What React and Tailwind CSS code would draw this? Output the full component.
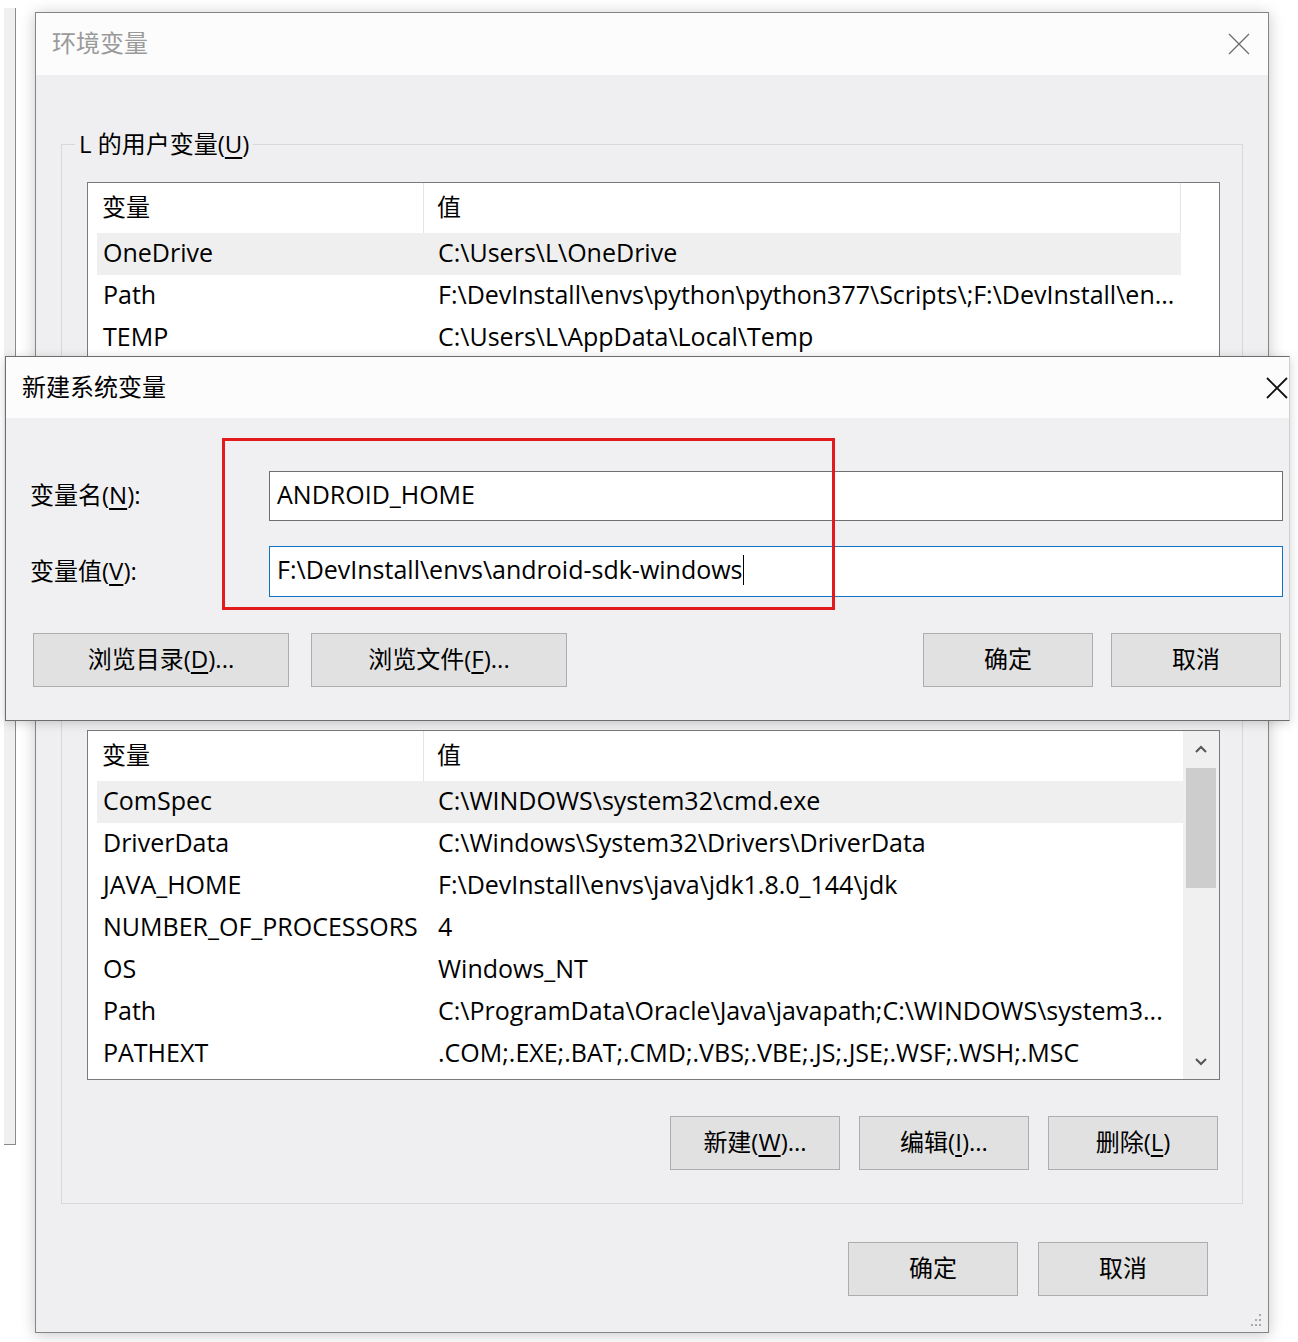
import React from "react";

const userVars = [
  ["OneDrive", "C:\\Users\\L\\OneDrive"],
  ["Path", "F:\\DevInstall\\envs\\python\\python377\\Scripts\\;F:\\DevInstall\\en..."],
  ["TEMP", "C:\\Users\\L\\AppData\\Local\\Temp"],
];

const systemVars = [
  ["ComSpec", "C:\\WINDOWS\\system32\\cmd.exe"],
  ["DriverData", "C:\\Windows\\System32\\Drivers\\DriverData"],
  ["JAVA_HOME", "F:\\DevInstall\\envs\\java\\jdk1.8.0_144\\jdk"],
  ["NUMBER_OF_PROCESSORS", "4"],
  ["OS", "Windows_NT"],
  ["Path", "C:\\ProgramData\\Oracle\\Java\\javapath;C:\\WINDOWS\\system3..."],
  ["PATHEXT", ".COM;.EXE;.BAT;.CMD;.VBS;.VBE;.JS;.JSE;.WSF;.WSH;.MSC"],
];

const Key = ({ children }) => (
  <span className="underline underline-offset-[4px] decoration-[1.5px]">{children}</span>
);

const Btn = ({ w = "w-[170px]", children }) => (
  <button
    className={`${w} h-[54px] flex items-center justify-center pb-[2px] border border-[#adadad] bg-[#e1e1e1] text-[24px] text-black`}
  >
    {children}
  </button>
);

const Chevron = ({ down }) => (
  <svg width="14" height="9" viewBox="0 0 14 9">
    <path
      d={down ? "M2 2 L7 7 L12 2" : "M2 7 L7 2 L12 7"}
      fill="none"
      stroke="#555"
      strokeWidth="2"
    />
  </svg>
);

const Scrollbar = () => (
  <div className="w-[36px] bg-[#f0f0f0] flex flex-col items-center">
    <div className="h-[37px] flex items-center justify-center">
      <Chevron />
    </div>
    <div className="w-[30px] h-[120px] bg-[#cdcdcd]" />
    <div className="flex-1" />
    <div className="h-[36px] flex items-center justify-center">
      <Chevron down />
    </div>
  </div>
);

const VarTable = ({ rows, scroll }) => (
  <div className="flex h-[350px] border border-[#7a7a7a] bg-white text-[25px]">
    <div className="flex-1 min-w-0 flex flex-col overflow-hidden">
      <div className="flex h-[50px] shrink-0 text-[24px]">
        <div className="w-[336px] pl-[14px] pb-[3px] flex items-center border-r border-[#e5e5e5]">变量</div>
        <div className={`flex-1 pl-[13px] pb-[3px] flex items-center ${scroll ? "" : "border-r border-[#e5e5e5]"}`}>值</div>
      </div>
      {rows.map(([name, value], i) => (
        <div
          key={name + i}
          className={`ml-[9px] flex h-[42px] shrink-0 items-center pb-[3px] ${i === 0 ? "bg-[#efefef]" : ""}`}
        >
          <div className="w-[327px] pl-[6px] whitespace-nowrap">{name}</div>
          <div className="flex-1 pl-[14px] whitespace-nowrap overflow-hidden">{value}</div>
        </div>
      ))}
    </div>
    {scroll ? <Scrollbar /> : <div className="w-[38px]" />}
  </div>
);

const Group = ({ label, children }) => (
  <fieldset className="border border-[#d8d8d8] pl-[25px] pr-[22px] pt-[22px] pb-[33px]">
    <legend className="-ml-[12px] px-[4px] leading-[32px]">{label}</legend>
    {children}
  </fieldset>
);

const CloseX = ({ color, width }) => (
  <svg width="22" height="22" viewBox="0 0 22 22">
    <path d="M1 1 L21 21 M21 1 L1 21" stroke={color} strokeWidth={width} />
  </svg>
);

export default function App() {
  return (
    <div className="relative w-[1298px] h-[1342px] overflow-hidden bg-white text-[24px] text-black font-['Open_Sans','Noto_Sans_CJK_SC',sans-serif]">
      {/* window behind, left edge */}
      <div className="absolute left-[4px] top-[8px] w-[12px] h-[1137px] bg-[#f0f0f0] border-r border-b border-[#8a8a8a]" />

      {/* 环境变量 */}
      <div className="absolute left-[35px] top-[12px] w-[1234px] h-[1321px] flex flex-col border border-[#858585] bg-[#efeef0] shadow-[0_2px_14px_rgba(0,0,0,0.22)]">
        <div className="h-[62px] shrink-0 bg-[#fcfcfd] flex items-center justify-between pl-[16px] pr-[18px]">
          <span className="text-[#9a9a9a] pb-[2px]">环境变量</span>
          <CloseX color="#6d6d6d" width="1.3" />
        </div>
        <div className="flex-1 flex flex-col px-[25px] pt-[53px]">
          <Group
            label={
              <>
                L 的用户变量(<Key>U</Key>)
              </>
            }
          >
            <VarTable rows={userVars} />
            {/* covered by the dialog */}
            <div className="invisible mt-[36px] mr-[2px] flex justify-end gap-[19px]">
              <Btn>新建(<Key>N</Key>)...</Btn>
              <Btn>编辑(<Key>E</Key>)...</Btn>
              <Btn>删除(<Key>D</Key>)</Btn>
            </div>
          </Group>
          <div className="mt-[20px]">
            <Group
              label={
                <span className="invisible">
                  系统变量(<Key>S</Key>)
                </span>
              }
            >
              <VarTable rows={systemVars} scroll />
              <div className="mt-[36px] mr-[2px] flex justify-end gap-[19px]">
                <Btn>新建(<Key>W</Key>)...</Btn>
                <Btn>编辑(<Key>I</Key>)...</Btn>
                <Btn>删除(<Key>L</Key>)</Btn>
              </div>
            </Group>
          </div>
          <div className="mt-[38px] pr-[35px] flex justify-end gap-[20px]">
            <Btn>确定</Btn>
            <Btn>取消</Btn>
          </div>
        </div>
        <svg className="absolute right-[6px] bottom-[5px]" width="14" height="14" viewBox="0 0 14 14">
          <g fill="#a8a8a8">
            <rect x="11" y="1" width="2" height="2" />
            <rect x="7" y="6" width="2" height="2" />
            <rect x="11" y="6" width="2" height="2" />
            <rect x="3" y="11" width="2" height="2" />
            <rect x="7" y="11" width="2" height="2" />
            <rect x="11" y="11" width="2" height="2" />
          </g>
        </svg>
      </div>

      {/* 新建系统变量 */}
      <div className="absolute left-[5px] top-[356px] w-[1285px] h-[365px] flex flex-col border border-[#6e6e6e] border-r-[#d0d0d0] bg-[#f0eff1] shadow-[0_2px_10px_rgba(0,0,0,0.18)]">
        <div className="h-[61px] shrink-0 bg-[#fcfcfd] flex items-center justify-between pl-[16px] pr-[1px]">
          <span className="pb-[2px]">新建系统变量</span>
          <CloseX color="#111" width="1.8" />
        </div>
        <div className="flex-1 flex flex-col pl-[24px] pr-[6px] pt-[53px]">
          <div className="flex items-center">
            <div className="w-[239px] shrink-0 pb-[2px]">
              变量名(<Key>N</Key>):
            </div>
            <div className="flex-1 h-[50px] border border-[#6f6f6f] bg-white flex items-center pl-[7px] pb-[3px] text-[25px]">
              ANDROID_HOME
            </div>
          </div>
          <div className="mt-[25px] flex items-center">
            <div className="w-[239px] shrink-0 pb-[2px]">
              变量值(<Key>V</Key>):
            </div>
            <div className="flex-1 h-[51px] border border-[#0f74c8] bg-white flex items-center pl-[7px] pb-[3px] text-[25px]">
              F:\DevInstall\envs\android-sdk-windows
              <span className="inline-block w-[1px] h-[30px] bg-black" />
            </div>
          </div>
          <div className="mt-[36px] ml-[3px] pr-[2px] flex">
            <Btn w="w-[256px]">
              浏览目录(<Key>D</Key>)...
            </Btn>
            <div className="ml-[22px]">
              <Btn w="w-[256px]">
                浏览文件(<Key>F</Key>)...
              </Btn>
            </div>
            <div className="ml-auto flex gap-[18px]">
              <Btn>确定</Btn>
              <Btn>取消</Btn>
            </div>
          </div>
        </div>
        {/* red annotation box */}
        <div className="absolute left-[216px] top-[81px] w-[613px] h-[172px] border-[3px] border-[#e31a1c]" />
      </div>
    </div>
  );
}
